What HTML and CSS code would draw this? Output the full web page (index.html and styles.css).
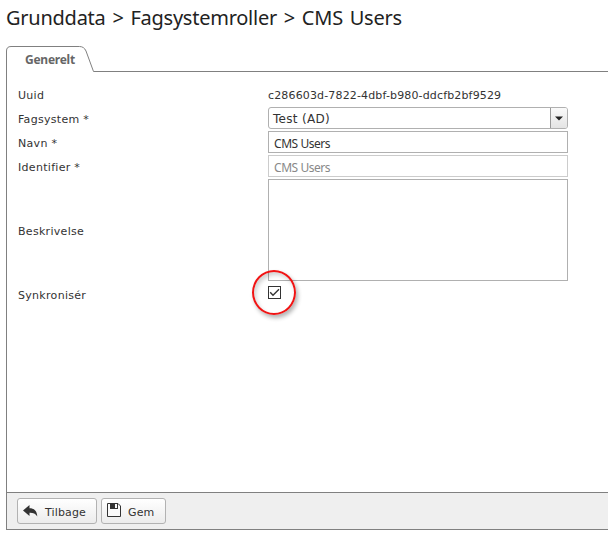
FILE: index.html
```html
<!DOCTYPE html>
<html lang="da">
<head>
<meta charset="utf-8">
<title>CMS Users</title>
<link rel="stylesheet" href="styles.css">
</head>
<body>
<h1 class="title"><span>Grunddata &gt; Fagsystemroller &gt; CMS Users</span></h1>
<main class="tabs">
  <div class="tabbar">
    <div class="tab">
      <svg class="tab-shape" width="90" height="26" viewBox="0 0 90 26"><path d="M.5 26V5Q.5.5 5 .5H73.500Q78 .5 80 5L87.500 25.500H90" fill="none" stroke="#808080"/></svg>
      <span class="tab-label">Generelt</span>
    </div>
    <div class="tab-rest"></div>
  </div>
  <div class="panel">
    <form class="form">
      <div class="row"><label><span>Uuid</span></label><span class="uuid">c286603d-7822-4dbf-b980-ddcfb2bf9529</span></div>
      <div class="row"><label><span>Fagsystem *</span></label>
        <div class="select"><span class="value">Test (AD)</span><span class="arrow"><svg width="8" height="5" viewBox="0 0 8 5"><path d="M0 .5h8L4 4.500z" fill="#222"/></svg></span></div></div>
      <div class="row"><label><span>Navn *</span></label><div class="input"><span>CMS Users</span></div></div>
      <div class="row"><label><span>Identifier *</span></label><div class="input disabled"><span>CMS Users</span></div></div>
      <div class="row tall"><label><span>Beskrivelse</span></label><div class="textarea"></div></div>
      <div class="row"><label><span>Synkronisér</span></label>
        <div class="check">
          <svg width="13" height="13" viewBox="0 0 13 13"><rect x=".5" y=".5" width="12" height="12" fill="#fff" stroke="#333"/><path d="M2.200 6.300L5 9.200L11 3.200" fill="none" stroke="#333" stroke-width="1.400"/></svg>
          <div class="ring"></div>
        </div></div>
    </form>
    <footer class="footer">
      <div class="btn back"><svg width="15" height="12" viewBox="0 0 15 12"><path d="M0 5.500L6.500 0V3.200C11 3.200 14 5.500 14.300 11.500C12.500 8.500 10 7.600 6.500 7.700V11z" fill="#333"/></svg><span>Tilbage</span></div>
      <div class="btn save"><svg width="15" height="15" viewBox="0 0 15 15"><path d="M.5.5H11L13.500 3V13.500H.5z" fill="#fafafa" stroke="#333"/><path d="M3 0H11V6H3z" fill="#333"/><path d="M8 1h2v4H8z" fill="#fafafa"/></svg><span>Gem</span></div>
    </footer>
  </div>
</main>
</body>
</html>
```
FILE: styles.css
```css
* { box-sizing: border-box; }
body { margin: 0; height: 545px; overflow: hidden; background: #fff; color: #333; font: 11px/16px "DejaVu Sans", sans-serif; display: flex; flex-direction: column; }
svg { display: block; flex: none; }
.title { margin: 0; height: 46px; padding: 4px 0 0 6px; font: 400 20px/28px "Noto Sans", sans-serif; letter-spacing: -.25px; word-spacing: 1.900px; color: #222; white-space: nowrap; }
.tabs { margin-left: 6px; height: 484px; display: flex; flex-direction: column; }
.tabbar { display: flex; height: 26px; }
.tab { position: relative; width: 90px; padding: 6px 0 0 19px; }
.tab-shape { position: absolute; left: 0; top: 0; }
.tab-label { font: 700 12px/16px "Noto Sans", sans-serif; letter-spacing: -.25px; color: #666; display: block; }
.tab-rest { flex: 1; border-bottom: 1px solid #808080; }
.panel { flex: 1; border-left: 1px solid #808080; display: flex; flex-direction: column; }
.form { flex: 1; margin: 0; padding: 11px 0 0 11px; }
.row { display: grid; grid-template-columns: 250px 300px; height: 24px; }
.row.tall { height: 104px; }
label { align-self: center; white-space: nowrap; padding-top: 2px; letter-spacing: .3px; }
.uuid { align-self: center; white-space: nowrap; padding-top: 2px; letter-spacing: .15px; }
.select { height: 22px; border: 1px solid #b0b0b0; border-radius: 3px; display: flex; justify-content: space-between; overflow: hidden; }
.value { font-size: 12px; line-height: 22px; padding-left: 4px; letter-spacing: .3px; }
.arrow { width: 17px; border-left: 1px solid #999; background: linear-gradient(#fafafa, #e4e4e4); display: flex; align-items: center; justify-content: center; }
.input { height: 22px; border: 1px solid #b0b0b0; padding-left: 5px; font: 12px/24px "Noto Sans", sans-serif; letter-spacing: -.45px; }
.disabled { border-color: #ccc; color: #888; }
.textarea { height: 102px; border: 1px solid #b0b0b0; }
.check { position: relative; padding-top: 3px; }
.ring { position: absolute; left: -16px; top: -13px; width: 44px; height: 45px; border: 2px solid #f01414; border-radius: 50%; box-shadow: 2px 3px 4px rgba(0,0,0,.3), inset 2px 3px 4px rgba(0,0,0,.18); }
.footer { height: 38px; border-top: 1px solid #808080; border-bottom: 1px solid #808080; background: #efefef; padding: 5px 0 0 10px; display: flex; gap: 4px; }
.btn { height: 26px; border: 1px solid #b2b2b2; border-radius: 3px; background: linear-gradient(#fff, #ececec); display: flex; white-space: nowrap; line-height: 27px; letter-spacing: .15px; }
.back { width: 80px; padding-left: 5px; gap: 7px; }
.back svg { margin-top: 6px; }
.save { width: 65px; padding-left: 5px; gap: 6px; }
.save svg { margin-top: 4px; }
```
